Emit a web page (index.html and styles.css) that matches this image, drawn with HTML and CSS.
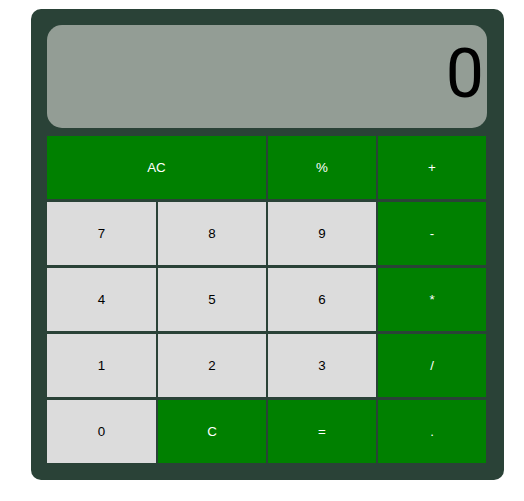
FILE: index.html
```html
<!DOCTYPE html>
<html lang="en">
<head>
<meta charset="utf-8">
<title>Calculator</title>
<link rel="stylesheet" href="styles.css">
</head>
<body>
<div class="calculator">
  <div class="display"><span class="value">0</span></div>
  <div class="keys">
    <button class="key op wide">AC</button>
    <button class="key op">%</button>
    <button class="key op">+</button>
    <button class="key">7</button>
    <button class="key">8</button>
    <button class="key">9</button>
    <button class="key op">-</button>
    <button class="key">4</button>
    <button class="key">5</button>
    <button class="key">6</button>
    <button class="key op">*</button>
    <button class="key">1</button>
    <button class="key">2</button>
    <button class="key">3</button>
    <button class="key op">/</button>
    <button class="key">0</button>
    <button class="key op">C</button>
    <button class="key op">=</button>
    <button class="key op">.</button>
  </div>
</div>
</body>
</html>
```

FILE: styles.css
```css
html, body {
  margin: 0;
  padding: 0;
  background: #ffffff;
}

body {
  padding: 9px 0 0 31px;
}

.calculator {
  width: 440px;
  padding: 16px 17px 17px 16px;
  background: #2a4237;
  border-radius: 10px;
  display: flex;
  flex-direction: column;
  gap: 8px;
}

.display {
  height: 103px;
  background: #939d95;
  border-radius: 15px;
  display: flex;
  align-items: center;
  justify-content: flex-end;
  padding: 0 3px 5px 0;
  box-sizing: border-box;
}

.value {
  font-family: Roboto, "Liberation Sans", sans-serif;
  font-weight: 400;
  font-size: 68px;
  line-height: 1;
  color: #000;
}

.keys {
  display: grid;
  grid-template-columns: 109px 108px 108px 108px;
  grid-auto-rows: 63px;
  column-gap: 2px;
  row-gap: 3px;
}

.key {
  margin: 0;
  padding: 0;
  border: none;
  background: #dcdcdc;
  color: #000;
  font-family: "Liberation Sans", Arial, sans-serif;
  font-size: 13.333px;
}

.key.op {
  background: #008000;
  color: #fff;
}

.key.wide {
  grid-column: span 2;
}
```
